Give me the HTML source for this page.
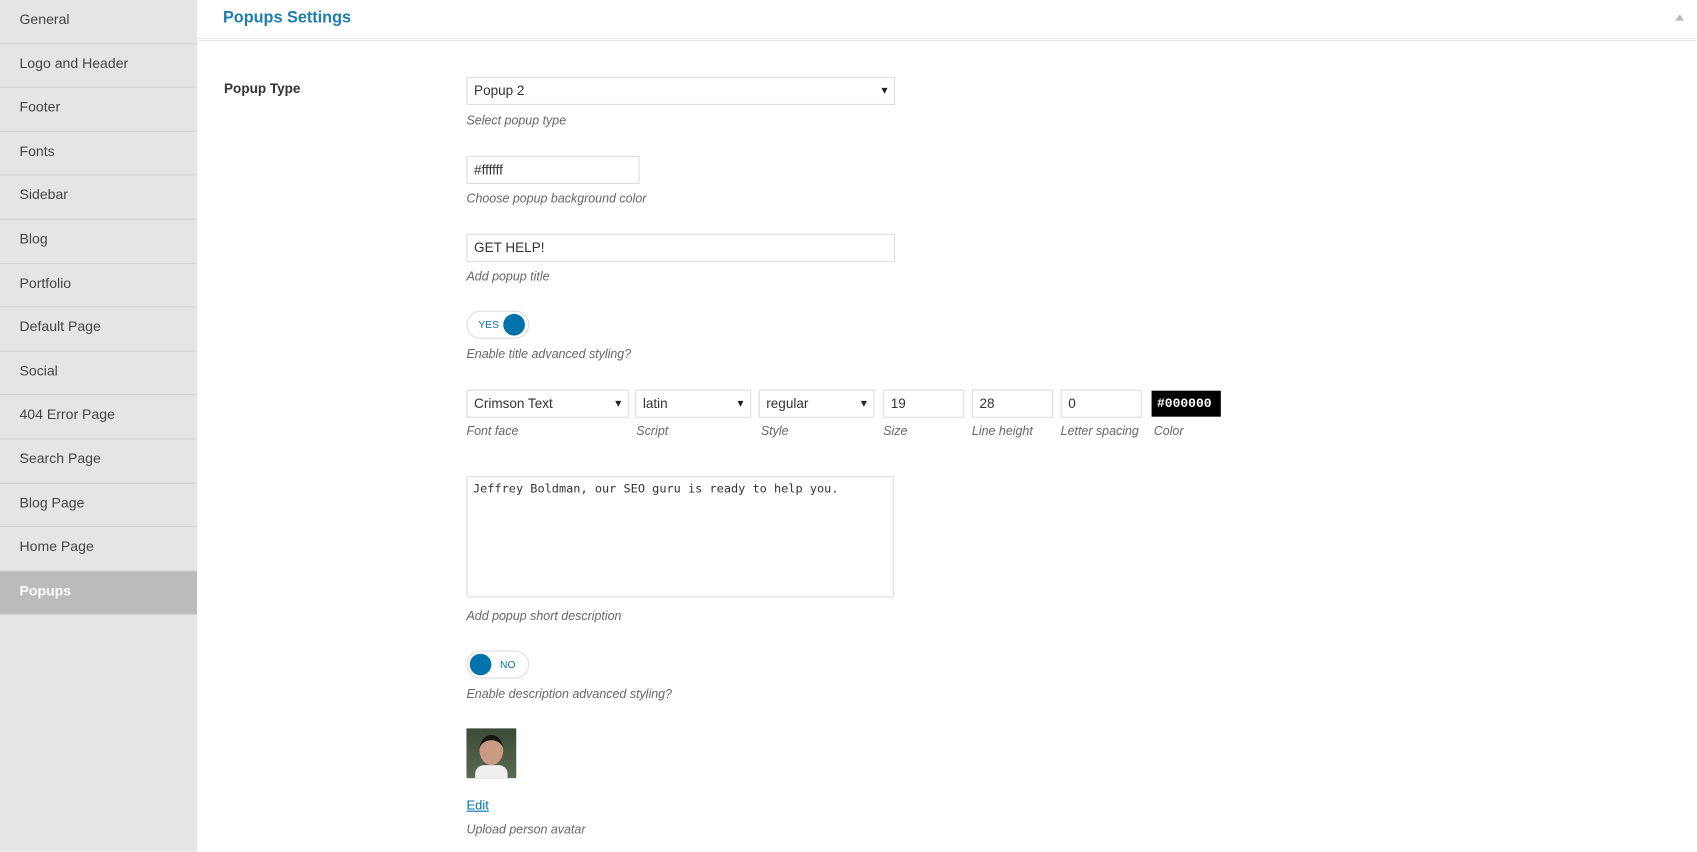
<!DOCTYPE html>
<html><head><meta charset="utf-8"><style>
*{box-sizing:border-box;margin:0;padding:0}
body{width:1697px;height:851px;overflow:hidden;background:#fff;font-family:"Liberation Sans",sans-serif;font-size:13px;color:#444}
#w{position:absolute;left:0;top:0;width:1568px;height:787px;transform:scale(1.0823);transform-origin:0 0}
.sb{position:absolute;left:0;top:0;width:182px;height:787px;background:#e5e5e5}
.sb div{height:40.6px;line-height:36px;padding-left:18px;border-bottom:1px solid #d2d2d2;font-size:13px;color:#444}
.sb div.a{background:#bbb;color:#fff;font-weight:bold}
.hd{position:absolute;left:182px;top:0;right:0;height:38px;border-bottom:3px double #e8e8e8}
.hd h1{position:absolute;left:24px;top:8px;font-size:15px;color:#1e7dad;font-weight:bold}
.tri{position:absolute;right:12px;top:13px;width:0;height:0;border-left:4px solid transparent;border-right:4px solid transparent;border-bottom:6px solid #bbb}
.ab{position:absolute}
.lbl{left:207px;top:75px;font-weight:bold;font-size:12.5px;color:#333}
.in{border:1px solid #ddd;height:26px;line-height:24px;padding-left:6px;font-size:12.5px;color:#333;background:#fff}
.sel::after{content:"▾";position:absolute;right:6px;top:0;font-size:11px;color:#222}
.d{font-style:italic;font-size:11.5px;color:#666}
.tg{width:58px;height:26px;border:1px solid #ddd;border-radius:13px;background:#fff}
.tg .k{position:absolute;top:2px;width:20px;height:20px;border-radius:50%;background:#0073aa}
.tg span{position:absolute;top:7px;font-size:9.5px;color:#0073aa}
</style></head><body><div id="w">
<div class="sb">
<div>General</div><div>Logo and Header</div><div>Footer</div><div>Fonts</div><div>Sidebar</div><div>Blog</div><div>Portfolio</div><div>Default Page</div><div>Social</div><div>404 Error Page</div><div>Search Page</div><div>Blog Page</div><div>Home Page</div><div class="a">Popups</div>
</div>
<div class="hd"><h1>Popups Settings</h1><div class="tri"></div></div>
<div class="ab lbl">Popup Type</div>
<div class="ab in sel" style="left:431px;top:71px;width:396px">Popup 2</div>
<div class="ab d" style="left:431px;top:106px">Select popup type</div>
<div class="ab in" style="left:431px;top:144px;width:160px">#ffffff</div>
<div class="ab d" style="left:431px;top:178px">Choose popup background color</div>
<div class="ab in" style="left:431px;top:216px;width:396px">GET HELP!</div>
<div class="ab d" style="left:431px;top:250px">Add popup title</div>
<div class="ab tg" style="left:431px;top:287px"><span style="left:10px">YES</span><div class="k" style="left:33px"></div></div>
<div class="ab d" style="left:431px;top:322px">Enable title advanced styling?</div>
<div class="ab in sel" style="left:431px;top:360px;width:150px">Crimson Text</div>
<div class="ab in sel" style="left:587px;top:360px;width:107px">latin</div>
<div class="ab in sel" style="left:701px;top:360px;width:107px">regular</div>
<div class="ab in" style="left:816px;top:360px;width:75px">19</div>
<div class="ab in" style="left:898px;top:360px;width:75px">28</div>
<div class="ab in" style="left:980px;top:360px;width:75px">0</div>
<div class="ab" style="left:1064px;top:361px;width:64px;height:24px;background:#000;color:#fff;font-family:'Liberation Mono',monospace;font-size:12px;font-weight:bold;line-height:24px;padding-left:5px">#000000</div>
<div class="ab d" style="left:431px;top:393px">Font face</div>
<div class="ab d" style="left:588px;top:393px">Script</div>
<div class="ab d" style="left:703px;top:393px">Style</div>
<div class="ab d" style="left:816px;top:393px">Size</div>
<div class="ab d" style="left:898px;top:393px">Line height</div>
<div class="ab d" style="left:980px;top:393px">Letter spacing</div>
<div class="ab d" style="left:1066px;top:393px">Color</div>
<div class="ab" style="left:431px;top:440px;width:395px;height:112px;border:1px solid #ddd;padding:4px 5px;font-family:'DejaVu Sans Mono',monospace;font-size:11px;color:#333">Jeffrey Boldman, our SEO guru is ready to help you.</div>
<div class="ab d" style="left:431px;top:564px">Add popup short description</div>
<div class="ab tg" style="left:431px;top:601px"><div class="k" style="left:2px"></div><span style="left:30px">NO</span></div>
<div class="ab d" style="left:431px;top:636px">Enable description advanced styling?</div>
<div class="ab" style="left:431px;top:673px;width:46px;height:46px;background:linear-gradient(#3a4a36,#5a6a50);overflow:hidden"><div style="position:absolute;left:12px;top:6px;width:22px;height:28px;border-radius:50%;background:#c99b82;border-top:5px solid #1a1410"></div><div style="position:absolute;left:8px;top:34px;width:30px;height:12px;background:#eee;border-radius:8px 8px 0 0"></div></div>
<div class="ab" style="left:431px;top:737px;color:#0073aa;text-decoration:underline;font-size:12px">Edit</div>
<div class="ab d" style="left:431px;top:761px">Upload person avatar</div>
</div></body></html>
